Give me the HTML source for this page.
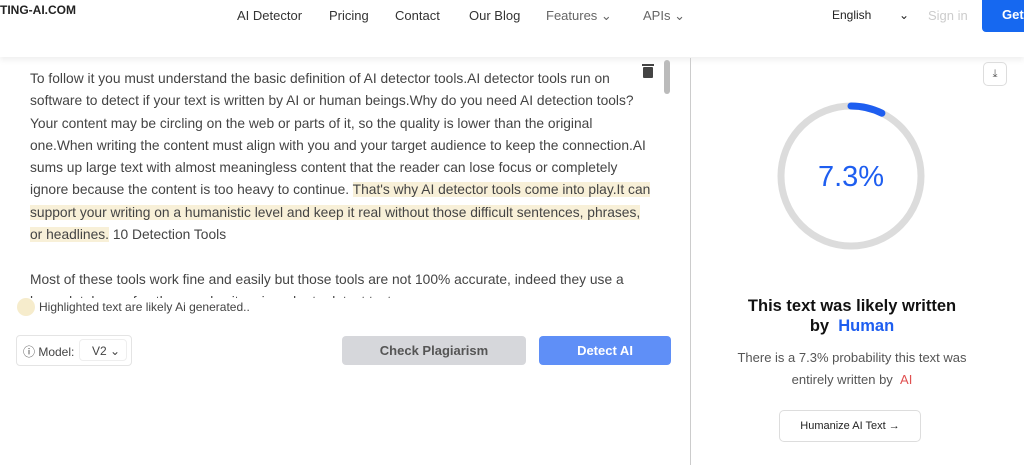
<!DOCTYPE html>
<html><head><style>
body{margin:0;width:1024px;height:465px;overflow:hidden;background:#fff;font-family:"Liberation Sans",sans-serif;position:relative}
.hdr{position:absolute;left:0;top:0;width:1024px;height:57px;background:#fff;box-shadow:0 3px 6px rgba(0,0,0,.07)}
.nav{position:absolute;top:8px;font-size:13px;color:#333}
.txt{position:absolute;left:30px;top:68px;width:622px;font-size:13.8px;line-height:22.3px;color:#444;height:230px;overflow:hidden}
.hl{background:#f8f0d8}
.btn{position:absolute;top:336px;height:29px;border-radius:4px;font-size:13px;text-align:center;line-height:29px;font-weight:bold}
</style></head><body>
<div class="hdr">
<div class="nav" style="left:0;top:3px;font-weight:bold;font-size:12px;color:#222">TING-AI.COM</div>
<div class="nav" style="left:237px">AI Detector</div>
<div class="nav" style="left:329px">Pricing</div>
<div class="nav" style="left:395px">Contact</div>
<div class="nav" style="left:469px">Our Blog</div>
<div class="nav" style="left:546px;color:#666">Features ⌄</div>
<div class="nav" style="left:643px;color:#666">APIs ⌄</div>
<div class="nav" style="left:832px;font-size:12px;color:#222">English</div>
<div class="nav" style="left:899px;font-size:12px;color:#222">⌄</div>
<div class="nav" style="left:928px;color:#ccc">Sign in</div>
<div style="position:absolute;left:982px;top:0;width:50px;height:32px;background:#1668f0;border-radius:0 0 0 4px;color:#fff;font-weight:bold;font-size:13px;line-height:30px;padding-left:20px">Get</div>
</div>
<div style="position:absolute;left:690px;top:58px;width:1px;height:407px;background:#ccc"></div>
<div style="position:absolute;left:664px;top:60px;width:6px;height:34px;background:#bbb;border-radius:3px"></div>
<div style="position:absolute;left:643px;top:67px;width:10px;height:11px;background:#444;border-radius:1px"></div>
<div style="position:absolute;left:642px;top:64px;width:12px;height:2px;background:#444"></div>
<div class="txt">To follow it you must understand the basic definition of AI detector tools.AI detector tools run on software to detect if your text is written by AI or human beings.Why do you need AI detection tools? Your content may be circling on the web or parts of it, so the quality is lower than the original one.When writing the content must align with you and your target audience to keep the connection.AI sums up large text with almost meaningless content that the reader can lose focus or completely ignore because the content is too heavy to continue. <span class="hl">That's why AI detector tools come into play.It can support your writing on a humanistic level and keep it real without those difficult sentences, phrases, or headlines.</span> 10 Detection Tools<br><br>Most of these tools work fine and easily but those tools are not 100% accurate, indeed they use a large database of authors and writers in order to detect text</div>
<div style="position:absolute;left:17px;top:298px;width:18px;height:18px;border-radius:50%;background:#f6eccc"></div>
<div style="position:absolute;left:39px;top:300px;font-size:12px;color:#444">Highlighted text are likely Ai generated..</div>
<div style="position:absolute;left:16px;top:335px;width:114px;height:29px;border:1px solid #e4e4e4;border-radius:4px;font-size:12px;color:#444"><span style="position:absolute;left:6px;top:7px">ⓘ Model:</span><span style="position:absolute;left:62px;top:3px;width:48px;height:22px;border:1px solid #eee;border-radius:4px;line-height:22px;padding-left:12px;box-sizing:border-box">V2 ⌄</span></div>
<div class="btn" style="left:342px;width:184px;background:#d6d7db;color:#555">Check Plagiarism</div>
<div class="btn" style="left:539px;width:132px;background:#5f8ff7;color:#fff">Detect AI</div>
<div style="position:absolute;left:983px;top:62px;width:22px;height:22px;border:1px solid #ddd;border-radius:5px;font-size:11px;text-align:center;line-height:22px;color:#555">⤓</div>
<svg style="position:absolute;left:775px;top:100px" width="152" height="152"><circle cx="76" cy="76" r="70" fill="none" stroke="#dcdcdc" stroke-width="7"/><circle cx="76" cy="76" r="70" fill="none" stroke="#1e5ef0" stroke-width="7" stroke-dasharray="32 500" transform="rotate(-90 76 76)" stroke-linecap="round"/><text x="76" y="86" text-anchor="middle" font-family="Liberation Sans" font-size="29" fill="#1e5ef0">7.3%</text></svg>
<div style="position:absolute;left:690px;top:296px;width:324px;text-align:center;font-size:16.5px;font-weight:bold;color:#111;line-height:20px">This text was likely written<br>by <span style="color:#1e5ef0">&nbsp;Human</span></div>
<div style="position:absolute;left:690px;top:347px;width:324px;text-align:center;font-size:13px;color:#555;line-height:22px">There is a 7.3% probability this text was<br>entirely written by &nbsp;<span style="color:#e05050">AI</span></div>
<div style="position:absolute;left:779px;top:410px;width:140px;height:30px;border:1px solid #ddd;border-radius:5px;text-align:center;line-height:30px;font-size:11px;color:#222">Humanize AI Text →</div>
</body></html>
